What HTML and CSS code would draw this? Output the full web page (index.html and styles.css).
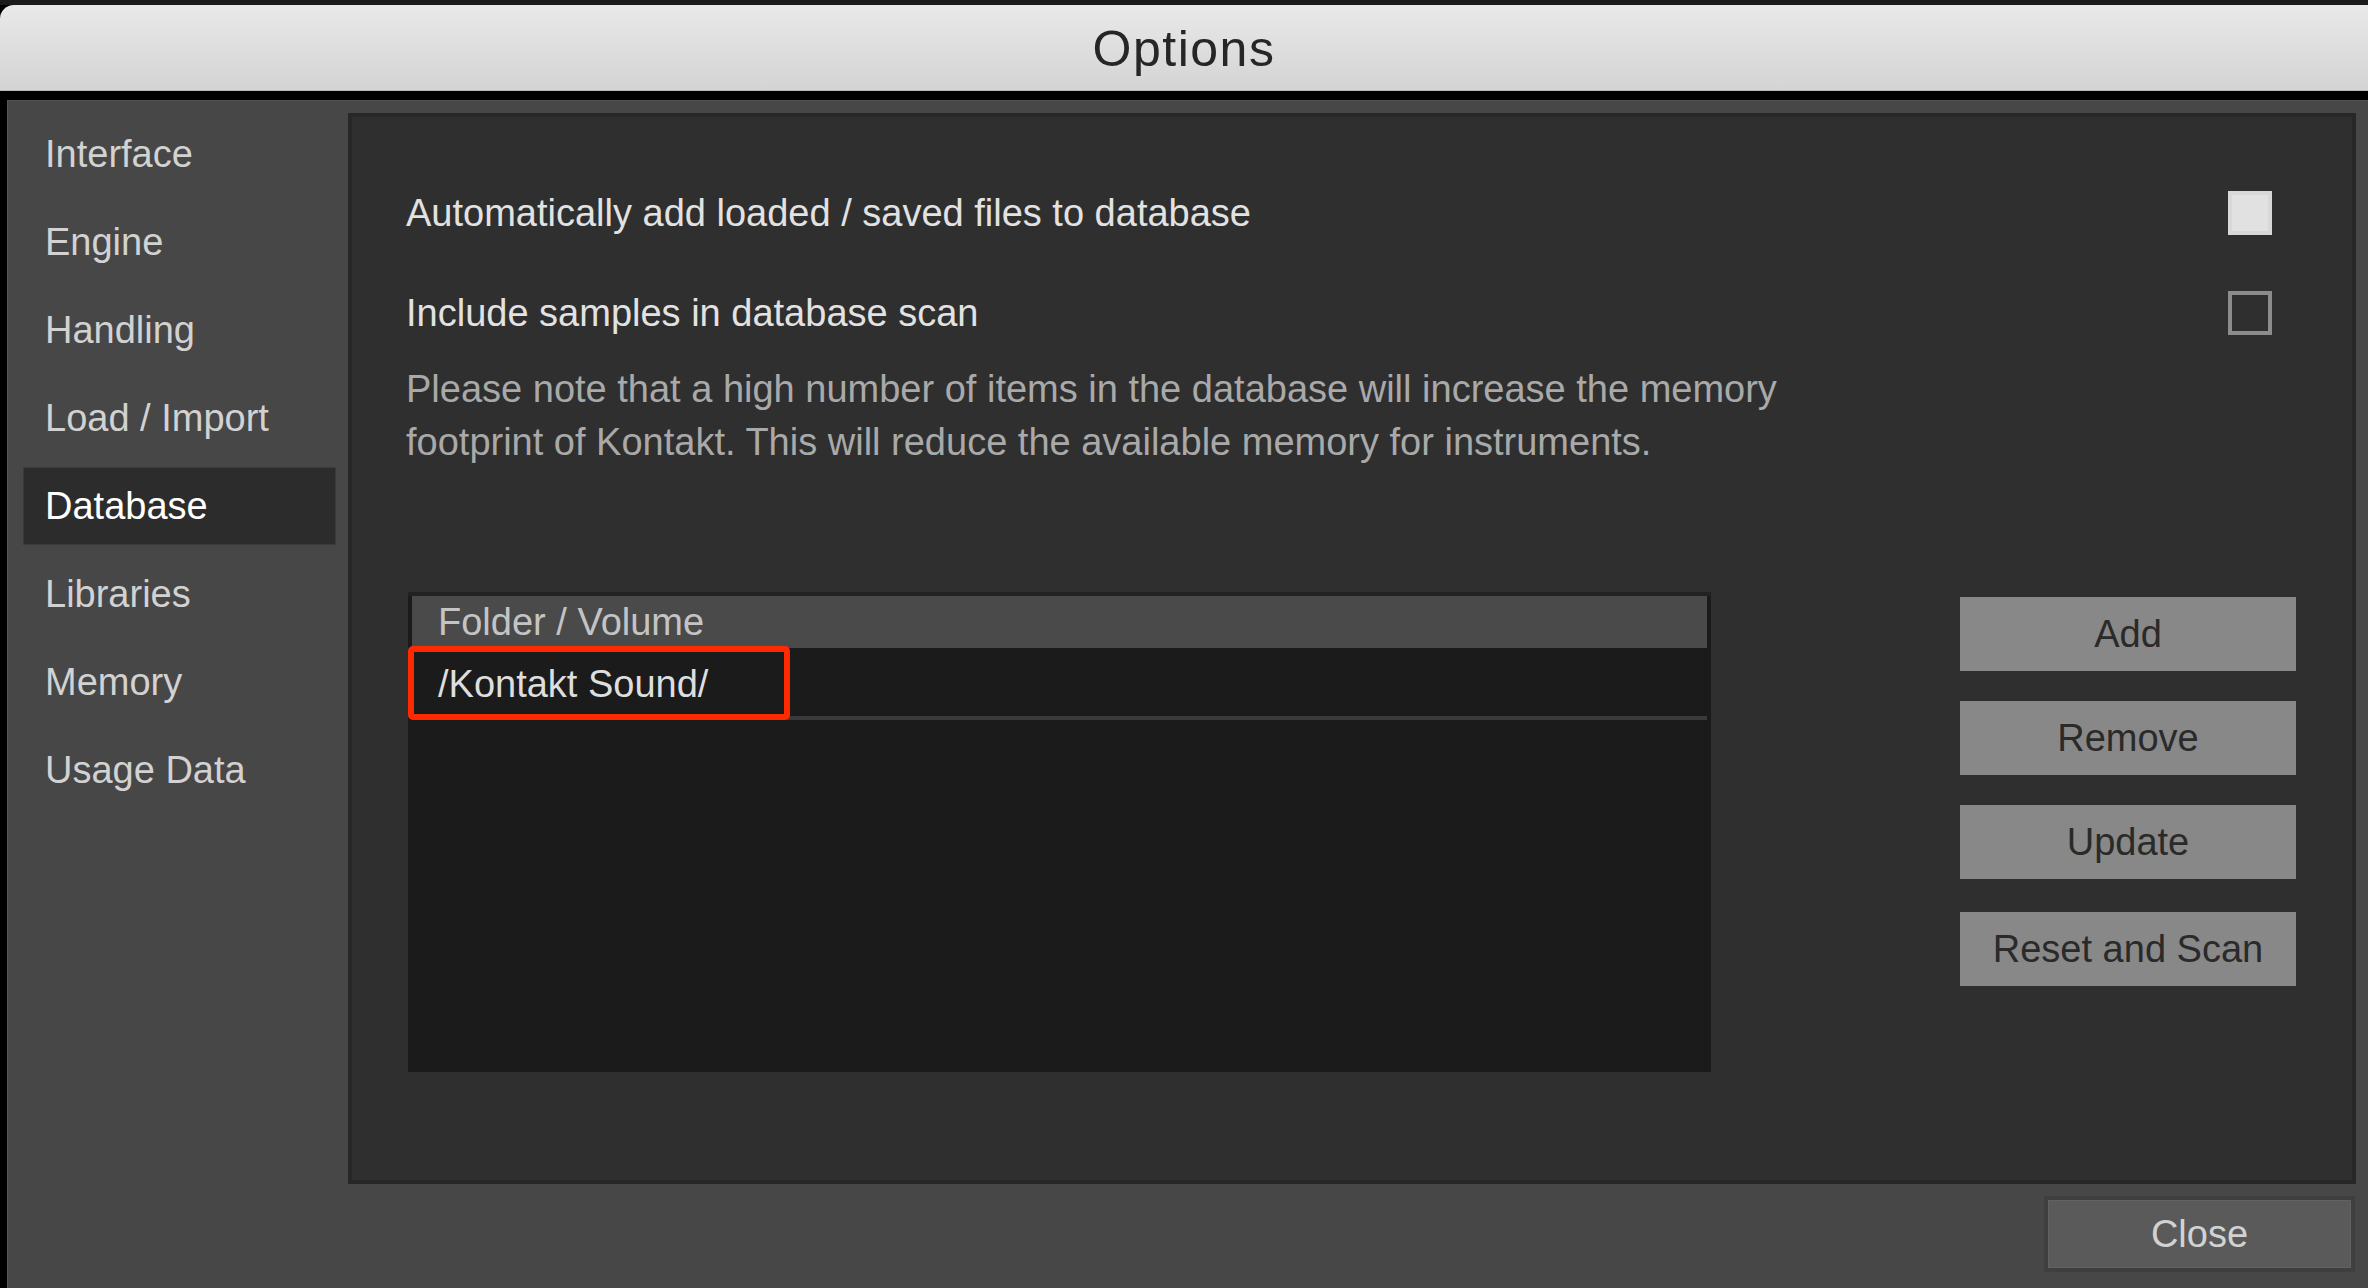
FILE: index.html
```html
<!DOCTYPE html>
<html lang="en">
<head>
    <meta charset="UTF-8">
    <meta name="viewport" content="width=device-width, initial-scale=1.0">
    <title>Options</title>
    <link rel="stylesheet" href="styles.css">
</head>
<body>
<div class="window">
  <div class="backdrop"></div>
  <header class="titlebar">
    <h1 class="title">Options</h1>
  </header>
  <div class="dialog">
    <nav class="sidebar">
      <div class="nav-item">Interface</div>
      <div class="nav-item">Engine</div>
      <div class="nav-item">Handling</div>
      <div class="nav-item">Load / Import</div>
      <div class="nav-item active">Database</div>
      <div class="nav-item">Libraries</div>
      <div class="nav-item">Memory</div>
      <div class="nav-item">Usage Data</div>
    </nav>

    <main class="panel">
      <div class="setting">
        <span class="setting-label">Automatically add loaded / saved files to database</span>
        <span class="checkbox checked"></span>
      </div>
      <div class="setting">
        <span class="setting-label">Include samples in database scan</span>
        <span class="checkbox"></span>
      </div>
      <p class="note">Please note that a high number of items in the database will increase the memory<br>footprint of Kontakt. This will reduce the available memory for instruments.</p>

      <div class="library">
        <div class="folder-list">
          <div class="list-header">Folder / Volume</div>
          <div class="list-row">/Kontakt Sound/</div>
          <div class="marker"></div>
        </div>
        <div class="actions">
          <button class="action">Add</button>
          <button class="action">Remove</button>
          <button class="action">Update</button>
          <button class="action last">Reset and Scan</button>
        </div>
      </div>
    </main>

    <footer class="dialog-footer">
      <button class="close">Close</button>
    </footer>
  </div>
</div>
</body>
</html>
```

FILE: styles.css
```css
* {
  box-sizing: border-box;
}
body {
  margin: 0;
  background: #000;
  width: 2368px;
  height: 1288px;
  overflow: hidden;
  font-family: "Liberation Sans", Arial, sans-serif;
}
.window {
  display: flex;
  flex-direction: column;
  height: 1288px;
}
.backdrop {
  height: 5px;
  background: #1d1b19;
}
.titlebar {
  height: 86px;
  background: linear-gradient(#e9e9e9, #d4d4d4);
  border-top-left-radius: 14px;
  border-bottom: 1px solid #b9b9b9;
  display: flex;
  justify-content: center;
  align-items: center;
}
.title {
  margin: 0;
  font-size: 50px;
  font-weight: normal;
  letter-spacing: 1.5px;
  color: #262626;
  padding-top: 2px;
}
.dialog {
  margin-top: 9px;
  margin-left: 7px;
  flex: 1;
  background: #474747;
  border-left: 1px solid #555;
  border-top: 1px solid #505050;
  display: grid;
  grid-template-columns: 340px 1fr;
  grid-template-rows: 1071px 1fr;
  padding: 12px 12px 0 0;
}

/* left menu */
.sidebar {
  grid-row: 1;
  grid-column: 1;
  padding: 3px 0 0 16px;
  display: flex;
  flex-direction: column;
  gap: 12px;
}
.nav-item {
  width: 311px;
  height: 76px;
  line-height: 76px;
  padding-left: 21px;
  font-size: 38px;
  color: #d2d2d2;
}
.nav-item.active {
  background: #2c2c2c;
  outline: 1px solid #3a3a3a;
  color: #fff;
}

/* main panel */
.panel {
  grid-row: 1;
  grid-column: 2;
  background: #2f2f2f;
  border: 4px solid #272727;
  padding: 46px 56px 0 54px;
  font-size: 38px;
}
.setting {
  height: 100px;
  display: flex;
  justify-content: space-between;
  align-items: center;
}
.setting-label {
  color: #e2e2e2;
}
.checkbox {
  width: 44px;
  height: 44px;
  margin-right: 24px;
  border: 4px solid #8c8c8c;
}
.checkbox.checked {
  background: #e1e1e1;
  border-color: #d8d8d8;
}
.note {
  margin: 0;
  line-height: 53px;
  color: #a9a9a9;
}
.library {
  margin-top: 123px;
  display: flex;
  justify-content: space-between;
}
.folder-list {
  position: relative;
  width: 1303px;
  height: 480px;
  margin-left: 2px;
  background: #1b1b1b;
  border-top: 4px solid #222;
  padding: 0 4px;
}
.list-header {
  height: 52px;
  line-height: 52px;
  padding-left: 26px;
  background: #4a4a4a;
  color: #c4c4c4;
}
.list-row {
  height: 72px;
  line-height: 72px;
  padding-left: 26px;
  color: #dedede;
  border-bottom: 4px solid #3a3a3a;
}
.marker {
  position: absolute;
  left: 0;
  top: 50px;
  width: 382px;
  height: 74px;
  border: 6px solid #ff2a00;
  border-radius: 5px;
}
.actions {
  width: 336px;
  padding-top: 5px;
  display: flex;
  flex-direction: column;
  gap: 30px;
}
.action {
  height: 74px;
  border: none;
  background: #888;
  color: #2a2a2a;
  font-family: inherit;
  font-size: 38px;
}
.action.last {
  margin-top: 3px;
}

/* bottom */
.dialog-footer {
  grid-row: 2;
  grid-column: 2;
  display: flex;
  justify-content: flex-end;
  align-items: flex-start;
  padding: 12px 1px 0 0;
}
.close {
  width: 311px;
  height: 76px;
  background: #5a5a5a;
  border: 4px solid #3f3f3f;
  box-shadow: inset 0 0 0 1px #626262;
  color: #d2d2d2;
  font-family: inherit;
  font-size: 38px;
}
```
